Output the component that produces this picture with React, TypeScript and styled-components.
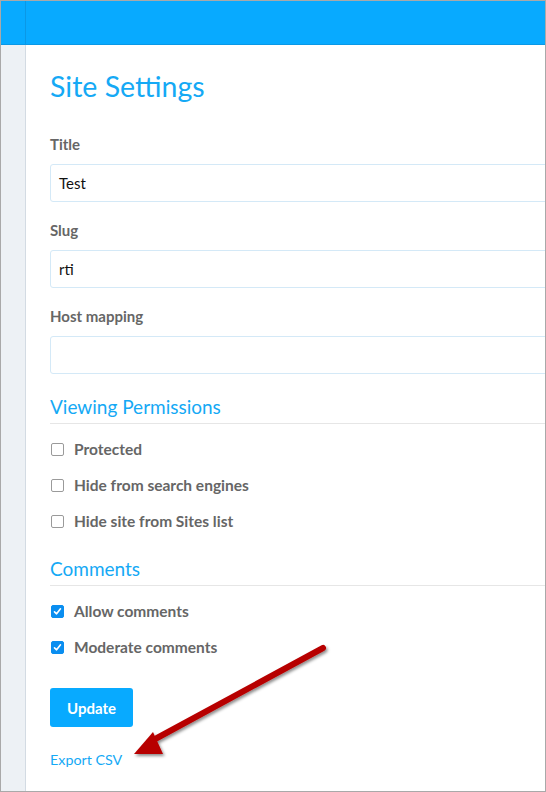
import React from "react";
import styled, { createGlobalStyle } from "styled-components";

const GlobalStyle = createGlobalStyle`
  html, body {
    margin: 0;
    padding: 0;
    background: #ffffff;
  }
  * {
    box-sizing: border-box;
  }
`;

const Frame = styled.div`
  position: relative;
  width: 546px;
  height: 792px;
  border: 1px solid #a9a9a9;
  display: flex;
  flex-direction: column;
  overflow: hidden;
  font-family: "Lato", "Liberation Sans", sans-serif;
`;

const TopBar = styled.div`
  height: 44px;
  flex-shrink: 0;
  display: flex;
  background: #08aaff;
  border-bottom: 1px solid #0a98e6;
`;

const TopBarStub = styled.div`
  width: 25px;
  border-right: 1px solid #0a98e6;
`;

const Body = styled.div`
  flex: 1;
  display: flex;
`;

const Sidebar = styled.div`
  width: 25px;
  flex-shrink: 0;
  background: #edf1f5;
  border-right: 1px solid #d3dbe3;
`;

const Main = styled.div`
  flex: 1;
  padding: 24px 0 0 24px;
  display: flex;
  flex-direction: column;
`;

const PageTitle = styled.h1`
  margin: 0 0 32px;
  font-size: 28.5px;
  line-height: 34px;
  font-weight: 400;
  color: #15a9f5;
`;

const Field = styled.div`
  display: flex;
  flex-direction: column;
  margin-bottom: 19px;
`;

const Label = styled.label`
  font-size: 15px;
  line-height: 18px;
  font-weight: 700;
  color: #666666;
  margin-bottom: 11px;
`;

const Input = styled.div`
  height: 38px;
  margin-right: -10px;
  border: 1px solid #d4e9f7;
  border-radius: 3px;
  padding: 0 8px;
  display: flex;
  align-items: center;
  font-size: 15px;
  color: #111111;
`;

const SectionTitle = styled.h2<{ $top: number }>`
  margin: ${(p) => p.$top}px 0 0;
  padding-bottom: 5px;
  font-size: 19px;
  line-height: 22px;
  font-weight: 400;
  color: #15a9f5;
  border-bottom: 1px solid #e6e6e6;
`;

const Options = styled.div`
  display: flex;
  flex-direction: column;
  gap: 18px;
  padding-top: 16px;
`;

const Option = styled.div`
  display: flex;
  align-items: center;
  gap: 10px;
  height: 18px;
  padding-left: 1px;
  font-size: 15.5px;
  font-weight: 700;
  color: #666666;
`;

const Box = styled.span<{ $checked?: boolean }>`
  width: 13px;
  height: 13px;
  border-radius: 2px;
  display: inline-flex;
  align-items: center;
  justify-content: center;
  background: ${(p) => (p.$checked ? "#0a8ef0" : "#ffffff")};
  border: 1px solid ${(p) => (p.$checked ? "#0a8ef0" : "#9a9a9a")};
`;

const UpdateButton = styled.button`
  align-self: flex-start;
  margin-top: 32px;
  width: 83px;
  height: 39px;
  border: none;
  border-radius: 3px;
  background: #08aaff;
  color: #ffffff;
  font-family: inherit;
  font-size: 15px;
  font-weight: 700;
`;

const ExportLink = styled.a`
  margin-top: 24px;
  font-size: 14.3px;
  line-height: 18px;
  color: #15a9f5;
  text-decoration: none;
`;

const Arrow = styled.svg`
  position: absolute;
  left: 120px;
  top: 635px;
  overflow: visible;
`;

const Check = () => (
  <svg width="9" height="9" viewBox="0 0 9 9">
    <path d="M1.5 4.8 L3.6 6.8 L7.5 1.8" fill="none" stroke="#ffffff" strokeWidth="1.6" strokeLinecap="round" strokeLinejoin="round" />
  </svg>
);

const CheckOption = ({ label, checked }: { label: string; checked?: boolean }) => (
  <Option>
    <Box $checked={checked}>{checked ? <Check /> : null}</Box>
    {label}
  </Option>
);

export default function App() {
  return (
    <>
      <GlobalStyle />
      <Frame>
        <TopBar>
          <TopBarStub />
        </TopBar>
        <Body>
          <Sidebar />
          <Main>
            <PageTitle>Site Settings</PageTitle>
            <Field>
              <Label>Title</Label>
              <Input>Test</Input>
            </Field>
            <Field>
              <Label>Slug</Label>
              <Input>rti</Input>
            </Field>
            <Field>
              <Label>Host mapping</Label>
              <Input />
            </Field>
            <SectionTitle $top={3}>Viewing Permissions</SectionTitle>
            <Options>
              <CheckOption label="Protected" />
              <CheckOption label="Hide from search engines" />
              <CheckOption label="Hide site from Sites list" />
            </Options>
            <SectionTitle $top={28}>Comments</SectionTitle>
            <Options>
              <CheckOption label="Allow comments" checked />
              <CheckOption label="Moderate comments" checked />
            </Options>
            <UpdateButton>Update</UpdateButton>
            <ExportLink href="#">Export CSV</ExportLink>
          </Main>
        </Body>
        <Arrow width="220" height="130" viewBox="0 0 220 130">
          <defs>
            <filter id="shadow" x="-20%" y="-20%" width="140%" height="140%">
              <feDropShadow dx="1.5" dy="2" stdDeviation="1.5" floodColor="#000000" floodOpacity="0.45" />
            </filter>
          </defs>
          <g filter="url(#shadow)">
            <line x1="202" y1="12" x2="36" y2="102" stroke="#b70000" strokeWidth="6" strokeLinecap="round" />
            <polygon points="13,118 32,96 42,118" fill="#b70000" />
          </g>
        </Arrow>
      </Frame>
    </>
  );
}
